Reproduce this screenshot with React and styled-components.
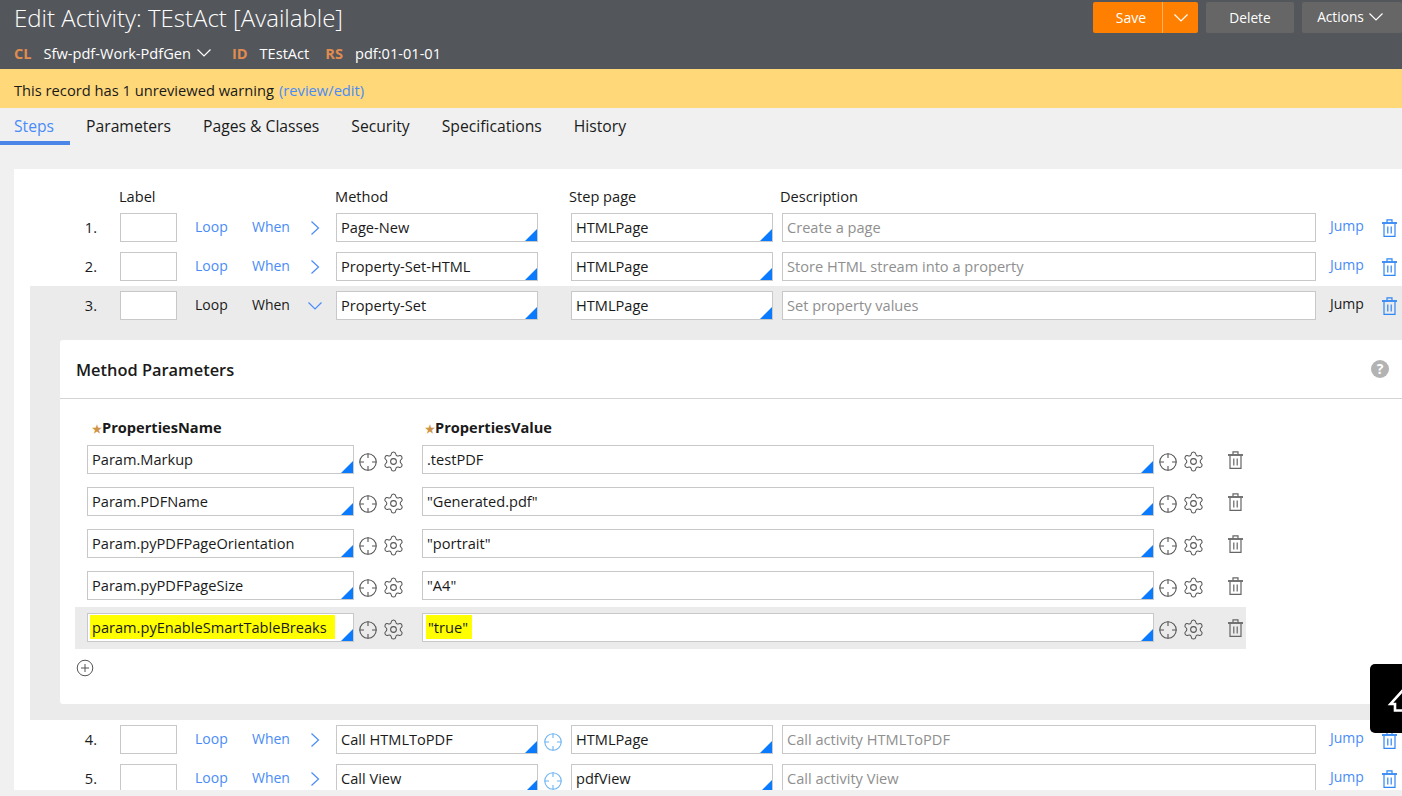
import React from 'react'
import styled, { createGlobalStyle } from 'styled-components'
import { Settings } from 'lucide-react'

const GlobalStyle = createGlobalStyle`
  html, body {
    margin: 0;
    padding: 0;
    background: #f0f0f0;
  }
  * { box-sizing: border-box; }
  body {
    font-family: "Open Sans", "Liberation Sans", sans-serif;
    font-size: 14.6px;
    color: #1a1a1a;
  }
`

const Page = styled.div`
  width: 1402px;
  height: 796px;
  overflow: hidden;
  position: relative;
  background: #f0f0f0;
`

const Header = styled.header`
  height: 69px;
  background: #53565b;
  color: #fff;
  padding: 0 0 0 14px;
  display: flex;
  justify-content: space-between;
`

const TitleBlock = styled.div`
  display: flex;
  flex-direction: column;
`

const Title = styled.h1`
  margin: 0;
  height: 38px;
  font-size: 24px;
  line-height: 36px;
  font-weight: 300;
`

const Meta = styled.div`
  display: flex;
  align-items: center;
  height: 30px;
  font-size: 14.6px;
`

const MetaKey = styled.span`
  color: #e08c50;
  font-weight: 700;
  margin-right: ${p => p.$gap}px;
`

const MetaValue = styled.span`
  margin-right: ${p => p.$gap}px;
  display: inline-flex;
  align-items: center;
  gap: 6px;
`

const Buttons = styled.div`
  display: flex;
  gap: 8px;
  padding-top: 2px;
`

const Btn = styled.button`
  font: inherit;
  font-size: 13.7px;
  color: #fff;
  border: 0;
  border-radius: 2px;
  height: 31px;
  padding: 0 ${p => p.$inset || 0}px ${p => p.$lift || 0}px 0;
  width: ${p => p.$w}px;
  background: #666;
  display: flex;
  align-items: center;
  justify-content: center;
  gap: 5px;
`

const SaveGroup = styled.div`
  display: flex;
  width: 105px;
  height: 31px;
  background: #ff8000;
  border-radius: 2px;
  font-size: 14px;
  color: #fff;
`

const SaveLabel = styled.span`
  width: 70px;
  padding-left: 7px;
  display: flex;
  align-items: center;
  justify-content: center;
  border-right: 1px solid #ffb060;
`

const SaveCaret = styled.span`
  flex: 1;
  display: flex;
  align-items: center;
  justify-content: center;
`

const Warning = styled.div`
  height: 39px;
  background: #ffd87a;
  padding: 3px 0 0 14px;
  display: flex;
  align-items: center;
  gap: 5px;
  font-size: 14.7px;
`

const TextLink = styled.a`
  color: #4a8cf7;
`

const Tabs = styled.nav`
  height: 37px;
  display: flex;
  align-items: flex-start;
  font-size: 15.7px;
`

const Tab = styled.div`
  height: 37px;
  line-height: 36px;
  padding: 0 16px;
  color: ${p => (p.$active ? '#4a8cf7' : '#1a1a1a')};
  border-bottom: 4px solid ${p => (p.$active ? '#4a86e8' : 'transparent')};
  &:first-child { padding-left: 14px; }
`

const Card = styled.section`
  margin: 24px 0 0 14px;
  height: 621px;
  background: #fff;
  overflow: hidden;
`

const StepHead = styled.div`
  height: 39px;
  display: grid;
  grid-template-columns: 105px 216px 234px 211px auto;
  padding-top: 17px;
  line-height: 20px;
`

const StepRow = styled.div`
  height: 39px;
  display: grid;
  grid-template-columns: ${p => (p.$inset ? 90 : 106)}px 57px 75px 58px 26px 202px 33px 202px 9px 534px 66px 20px;
  align-items: start;
  padding-top: 5px;
`

const Num = styled.span`
  text-align: right;
  padding-right: 23px;
  line-height: 29px;
`

const Field = styled.div`
  position: relative;
  height: 29px;
  border: 1.5px solid #c8c8c8;
  background: #fff;
  padding-left: 4px;
  line-height: 27px;
  white-space: nowrap;
  color: ${p => (p.$placeholder ? '#8f8f8f' : '#1a1a1a')};
  &::after {
    content: ${p => (p.$menu ? '""' : 'none')};
    position: absolute;
    right: 0;
    bottom: 0;
    border-style: solid;
    border-width: 0 0 12px 12px;
    border-color: transparent transparent #0a7bff transparent;
  }
`

const Action = styled.span`
  line-height: ${p => p.$line || 28}px;
  font-size: 14px;
  padding-left: ${p => p.$pad || 0}px;
  color: ${p => (p.$plain ? '#1a1a1a' : '#4a8cf7')};
`

const Center = styled.span`
  display: flex;
  align-items: center;
  height: 29px;
  justify-content: ${p => p.$justify || 'center'};
  padding-left: ${p => p.$pad || 0}px;
  margin-left: ${p => p.$pull || 0}px;
`

const CallSlot = styled(Center)`
  justify-content: flex-start;
  padding-left: 6px;
  & > svg { margin-top: 4px; }
`

const Expanded = styled.div`
  margin-left: 16px;
  height: 434px;
  background: #ebebeb;
  display: flex;
  flex-direction: column;
`

const ParamPanel = styled.div`
  margin: 15px 0 0 30px;
  height: 364px;
  background: #fff;
  border-radius: 3px 0 0 3px;
`

const PanelHead = styled.div`
  height: 59px;
  border-bottom: 1px solid #d4d4d4;
  padding: 0 13px 0 16px;
  display: flex;
  align-items: center;
  justify-content: space-between;
`

const PanelTitle = styled.h2`
  margin: 0;
  font-size: 16.4px;
  font-weight: 600;
`

const Help = styled.span`
  width: 18px;
  height: 18px;
  border-radius: 50%;
  background: #b3b3b3;
  color: #fff;
  font-size: 14px;
  font-weight: 700;
  line-height: 18px;
  text-align: center;
`

const ParamHead = styled.div`
  display: grid;
  grid-template-columns: 333px 400px;
  padding: 17px 0 0 32px;
  height: 40px;
  line-height: 22px;
  font-weight: 700;
`

const Star = styled.span`
  color: #cf9445;
  font-size: 11px;
`

const ParamRow = styled.div`
  margin-left: 15px;
  width: 1171px;
  height: 42px;
  padding: 6px 0 0 12px;
  display: grid;
  grid-template-columns: 267px 68px 732px 92px;
  background: ${p => (p.$active ? '#ebebeb' : 'transparent')};
`

const IconPair = styled.span`
  display: flex;
  align-items: center;
  height: 29px;
  padding-left: 5px;
  gap: 5px;
  & > * { flex-shrink: 0; }
  & > svg { margin-top: 4px; }
`

const Mark = styled.span`
  background: #ffff00;
  display: inline-block;
  margin-left: ${p => p.$left}px;
  padding: 0 ${p => p.$right}px 0 2px;
  height: 24px;
  line-height: 24px;
`

const AddRow = styled.div`
  padding: 10px 0 0 16px;
  display: flex;
`

const ScrollTop = styled.div`
  position: absolute;
  left: 1370px;
  top: 664px;
  width: 32px;
  height: 69px;
  background: #000;
  border-radius: 5px 0 0 5px;
  overflow: hidden;
`

const Chevron = ({ dir = 'right', color = '#4a8cf7' }) => (
  <svg width="14" height="14" viewBox="0 0 14 14" fill="none" stroke={color} strokeWidth="1.2">
    <polyline points={dir === 'right' ? '1.5,0.5 8.5,7 1.5,13.5' : '0.5,3.5 7,10 13.5,3.5'} />
  </svg>
)

const Crosshair = ({ color = '#555' }) => (
  <svg width="18" height="18" viewBox="0 0 18 18" fill="none" stroke={color} strokeWidth="1.1">
    <circle cx="9" cy="9" r="8.2" />
    <path d="M9 0.5V5M9 13V17.5M0.5 9H5M13 9H17.5" />
  </svg>
)

const Trash = ({ color = '#666' }) => (
  <svg width="15" height="18" viewBox="0 0 15 18" fill="none" stroke={color} strokeWidth="1.2">
    <path d="M0 4H15" strokeWidth="1.8" />
    <path d="M5 3.5V0.8H10V3.5" />
    <path d="M2 4.5V17.4H13V4.5" />
    <path d="M5.8 7.5V14.5M9.2 7.5V14.5" />
  </svg>
)

const AddIcon = () => (
  <svg width="18" height="18" viewBox="0 0 18 18" fill="none" stroke="#555" strokeWidth="1">
    <circle cx="9" cy="9" r="7.8" />
    <path d="M9 5V13M5 9H13" />
  </svg>
)

const Gear = () => <Settings size={23} strokeWidth={1.1} color="#555" />

const steps = [
  { n: 1, method: 'Page-New', page: 'HTMLPage', desc: 'Create a page' },
  { n: 2, method: 'Property-Set-HTML', page: 'HTMLPage', desc: 'Store HTML stream into a property' },
  { n: 3, method: 'Property-Set', page: 'HTMLPage', desc: 'Set property values', open: true },
  { n: 4, method: 'Call HTMLToPDF', page: 'HTMLPage', desc: 'Call activity HTMLToPDF', call: true },
  { n: 5, method: 'Call View', page: 'pdfView', desc: 'Call activity View', call: true },
]

const params = [
  { name: 'Param.Markup', value: '.testPDF' },
  { name: 'Param.PDFName', value: '"Generated.pdf"' },
  { name: 'Param.pyPDFPageOrientation', value: '"portrait"' },
  { name: 'Param.pyPDFPageSize', value: '"A4"' },
  { name: 'param.pyEnableSmartTableBreaks', value: '"true"', active: true },
]

const Step = ({ step }) => (
  <StepRow $inset={step.open}>
    <Num>{step.n}.</Num>
    <Field />
    <Action $pad={18} $plain={step.open}>Loop</Action>
    <Action $plain={step.open}>When</Action>
    <Center $justify="flex-start" $pull={step.open ? -2 : 0}>
      <Chevron dir={step.open ? 'down' : 'right'} />
    </Center>
    <Field $menu>{step.method}</Field>
    <CallSlot>{step.call && <Crosshair color="#6db3f2" />}</CallSlot>
    <Field $menu>{step.page}</Field>
    <span />
    <Field $placeholder>{step.desc}</Field>
    <Action $pad={14} $line={26} $plain={step.open}>Jump</Action>
    <Center $justify="flex-start"><Trash color="#2f86f5" /></Center>
  </StepRow>
)

const ParamLine = ({ param }) => (
  <ParamRow $active={param.active}>
    <Field $menu>
      {param.active ? <Mark $left={-2} $right={8}>{param.name}</Mark> : param.name}
    </Field>
    <IconPair><Crosshair /><Gear /></IconPair>
    <Field $menu>
      {param.active ? <Mark $left={-1} $right={4}>{param.value}</Mark> : param.value}
    </Field>
    <IconPair>
      <Crosshair />
      <Gear />
      <Center $pad={18}><Trash /></Center>
    </IconPair>
  </ParamRow>
)

const App = () => (
  <Page>
    <GlobalStyle />
    <Header>
      <TitleBlock>
        <Title>Edit Activity: TEstAct [Available]</Title>
        <Meta>
          <MetaKey $gap={12}>CL</MetaKey>
          <MetaValue $gap={21}>
            Sfw-pdf-Work-PdfGen <Chevron dir="down" color="#fff" />
          </MetaValue>
          <MetaKey $gap={12}>ID</MetaKey>
          <MetaValue $gap={16}>TEstAct</MetaValue>
          <MetaKey $gap={12}>RS</MetaKey>
          <MetaValue $gap={0}>pdf:01-01-01</MetaValue>
        </Meta>
      </TitleBlock>
      <Buttons>
        <SaveGroup>
          <SaveLabel>Save</SaveLabel>
          <SaveCaret><Chevron dir="down" color="#fff" /></SaveCaret>
        </SaveGroup>
        <Btn $w={88}>Delete</Btn>
        <Btn $w={100} $lift={2} $inset={4}>Actions <Chevron dir="down" color="#fff" /></Btn>
      </Buttons>
    </Header>

    <Warning>
      This record has 1 unreviewed warning <TextLink>(review/edit)</TextLink>
    </Warning>

    <Tabs>
      <Tab $active>Steps</Tab>
      <Tab>Parameters</Tab>
      <Tab>Pages &amp; Classes</Tab>
      <Tab>Security</Tab>
      <Tab>Specifications</Tab>
      <Tab>History</Tab>
    </Tabs>

    <Card>
      <StepHead>
        <span />
        <span>Label</span>
        <span>Method</span>
        <span>Step page</span>
        <span>Description</span>
      </StepHead>
      <Step step={steps[0]} />
      <Step step={steps[1]} />
      <Expanded>
        <Step step={steps[2]} />
        <ParamPanel>
          <PanelHead>
            <PanelTitle>Method Parameters</PanelTitle>
            <Help>?</Help>
          </PanelHead>
          <ParamHead>
            <span><Star>★</Star>PropertiesName</span>
            <span><Star>★</Star>PropertiesValue</span>
          </ParamHead>
          {params.map(p => <ParamLine key={p.name} param={p} />)}
          <AddRow><AddIcon /></AddRow>
        </ParamPanel>
      </Expanded>
      <Step step={steps[3]} />
      <Step step={steps[4]} />
    </Card>

    <ScrollTop>
      <svg width="32" height="69" viewBox="0 0 32 69" fill="none" stroke="#fff" strokeWidth="2.6">
        <path d="M34 25L20.5 40H25V46.5H34" />
      </svg>
    </ScrollTop>
  </Page>
)

export default App
